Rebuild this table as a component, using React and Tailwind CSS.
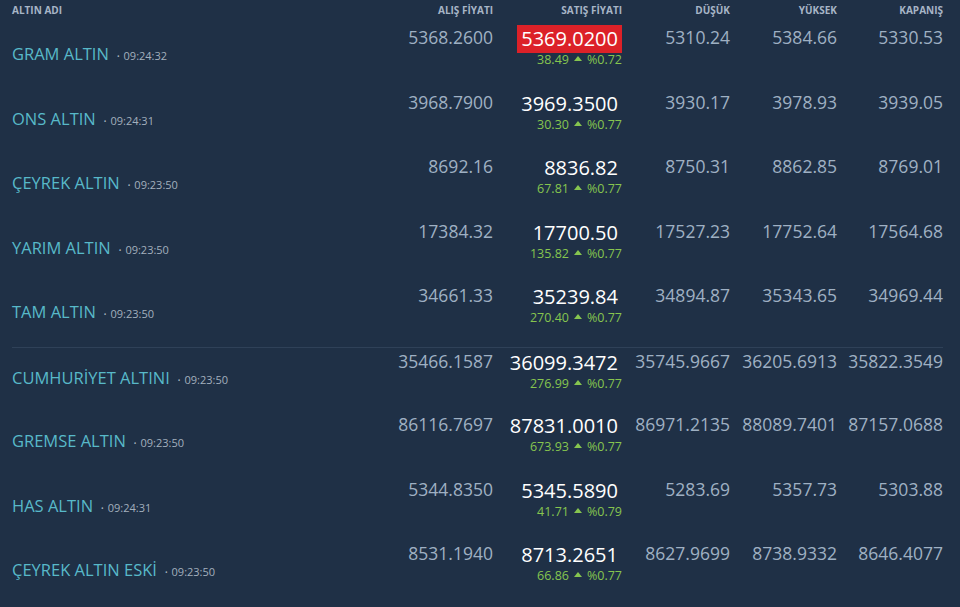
const rows = [
  ["GRAM ALTIN", "09:24:32", "5368.2600", "5369.0200", "38.49", "%0.72", "5310.24", "5384.66", "5330.53", true],
  ["ONS ALTIN", "09:24:31", "3968.7900", "3969.3500", "30.30", "%0.77", "3930.17", "3978.93", "3939.05"],
  ["ÇEYREK ALTIN", "09:23:50", "8692.16", "8836.82", "67.81", "%0.77", "8750.31", "8862.85", "8769.01"],
  ["YARIM ALTIN", "09:23:50", "17384.32", "17700.50", "135.82", "%0.77", "17527.23", "17752.64", "17564.68"],
  ["TAM ALTIN", "09:23:50", "34661.33", "35239.84", "270.40", "%0.77", "34894.87", "35343.65", "34969.44"],
  ["CUMHURİYET ALTINI", "09:23:50", "35466.1587", "36099.3472", "276.99", "%0.77", "35745.9667", "36205.6913", "35822.3549"],
  ["GREMSE ALTIN", "09:23:50", "86116.7697", "87831.0010", "673.93", "%0.77", "86971.2135", "88089.7401", "87157.0688"],
  ["HAS ALTIN", "09:24:31", "5344.8350", "5345.5890", "41.71", "%0.79", "5283.69", "5357.73", "5303.88"],
  ["ÇEYREK ALTIN ESKİ", "09:23:50", "8531.1940", "8713.2651", "66.86", "%0.77", "8627.9699", "8738.9332", "8646.4077"],
];

const cols = "grid grid-cols-[348px_133px_129px_108px_107px_106px]";

const Up = () => (
  <svg width="8" height="5" viewBox="0 0 8 5" className="inline-block mx-[5px] relative -top-[2px]">
    <path d="M4 0 L8 5 L0 5 Z" fill="currentColor" />
  </svg>
);

const Row = ({ r, i }) => {
  const [name, time, buy, sell, diff, pct, low, high, close, flash] = r;
  return (
    <div className={`${cols} h-[64.5px] ${i === 5 ? "border-t border-[#2f4158]" : ""}`}>
      <div className="flex items-baseline pt-[19px] leading-[22px]">
        <span className="text-[16.5px] text-[#58b9c9]">{name}</span>
        <span className="ml-2 text-[11px] text-[#a3afbd]">
          <span className="text-[7px] mr-[4px] relative -top-px">•</span>
          {time}
        </span>
      </div>
      <div className="text-right text-[17.5px] leading-[26px] text-[#9fb0c3]">{buy}</div>
      <div className="flex flex-col items-end pt-px">
        <span
          className={`text-[20px] leading-[28px] px-1 text-white ${flash ? "bg-[#dc2128]" : ""}`}
        >
          {sell}
        </span>
        <span className="text-[12.5px] leading-[14px] text-[#86c54f]">
          {diff}
          <Up />
          {pct}
        </span>
      </div>
      <div className="text-right text-[17.5px] leading-[26px] text-[#9fb0c3]">{low}</div>
      <div className="text-right text-[17.5px] leading-[26px] text-[#9fb0c3]">{high}</div>
      <div className="text-right text-[17.5px] leading-[26px] text-[#9fb0c3]">{close}</div>
    </div>
  );
};

export default function App() {
  return (
    <div
      className="w-[960px] h-[607px] overflow-hidden bg-[#1f3046] pl-3 pr-[17px]"
      style={{ fontFamily: '"Open Sans", "Noto Sans", sans-serif' }}
    >
      <div className={`${cols} h-6 pt-[3px] text-[10px] leading-[14px] font-bold text-[#a7b5c6]`}>
        <div>ALTIN ADI</div>
        <div className="text-right">ALIŞ FİYATI</div>
        <div className="text-right">SATIŞ FİYATI</div>
        <div className="text-right">DÜŞÜK</div>
        <div className="text-right">YÜKSEK</div>
        <div className="text-right">KAPANIŞ</div>
      </div>
      {rows.map((r, i) => (
        <Row key={r[0]} r={r} i={i} />
      ))}
    </div>
  );
}
